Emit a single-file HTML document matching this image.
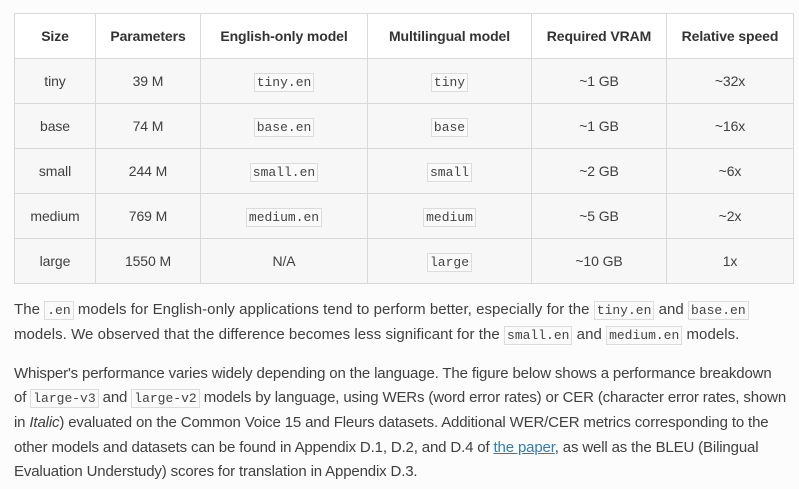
<!DOCTYPE html>
<html><head><meta charset="utf-8">
<style>
body{margin:0;width:799px;height:489px;background:#fcfcfc;font-family:"Liberation Sans",sans-serif;color:#404040;overflow:hidden;position:relative}
table{position:absolute;left:14px;top:13px;border-collapse:collapse;font-size:14px;letter-spacing:-0.1px}
td,th{border:1px solid #d9d9d9;text-align:center;padding:0;height:44px}
th{background:#fff;font-weight:bold;color:#333}
tbody td{background:#f7f7f7}
code{font-family:"Liberation Mono",monospace;font-size:13px;border:1px solid #dcdcdc;background:#fafafa;padding:1px 2px;letter-spacing:0;color:#444}
p{position:absolute;left:14px;margin:0;font-size:15px;line-height:24.2px;letter-spacing:0.05px;white-space:nowrap}
p code{font-size:13px}
a{color:#2980b9}
</style></head><body>
<table>
<thead><tr><th style="width:80px">Size</th><th style="width:104px">Parameters</th><th style="width:166px">English-only model</th><th style="width:163px">Multilingual model</th><th style="width:134px">Required VRAM</th><th style="width:126px">Relative speed</th></tr></thead>
<tbody>
<tr><td>tiny</td><td>39 M</td><td><code>tiny.en</code></td><td><code>tiny</code></td><td>~1 GB</td><td>~32x</td></tr>
<tr><td>base</td><td>74 M</td><td><code>base.en</code></td><td><code>base</code></td><td>~1 GB</td><td>~16x</td></tr>
<tr><td>small</td><td>244 M</td><td><code>small.en</code></td><td><code>small</code></td><td>~2 GB</td><td>~6x</td></tr>
<tr><td>medium</td><td>769 M</td><td><code>medium.en</code></td><td><code>medium</code></td><td>~5 GB</td><td>~2x</td></tr>
<tr><td>large</td><td>1550 M</td><td>N/A</td><td><code>large</code></td><td>~10 GB</td><td>1x</td></tr>
</tbody></table>
<p style="top:298px">The <code>.en</code> models for English-only applications tend to perform better, especially for the <code>tiny.en</code> and <code>base.en</code><br>models. We observed that the difference becomes less significant for the <code>small.en</code> and <code>medium.en</code> models.</p>
<p style="top:362px;letter-spacing:-0.15px">Whisper's performance varies widely depending on the language. The figure below shows a performance breakdown<br>of <code>large-v3</code> and <code>large-v2</code> models by language, using WERs (word error rates) or CER (character error rates, shown<br>in <i>Italic</i>) evaluated on the Common Voice 15 and Fleurs datasets. Additional WER/CER metrics corresponding to the<br>other models and datasets can be found in Appendix D.1, D.2, and D.4 of <a href="#">the paper</a>, as well as the BLEU (Bilingual<br>Evaluation Understudy) scores for translation in Appendix D.3.</p>
</body></html>
